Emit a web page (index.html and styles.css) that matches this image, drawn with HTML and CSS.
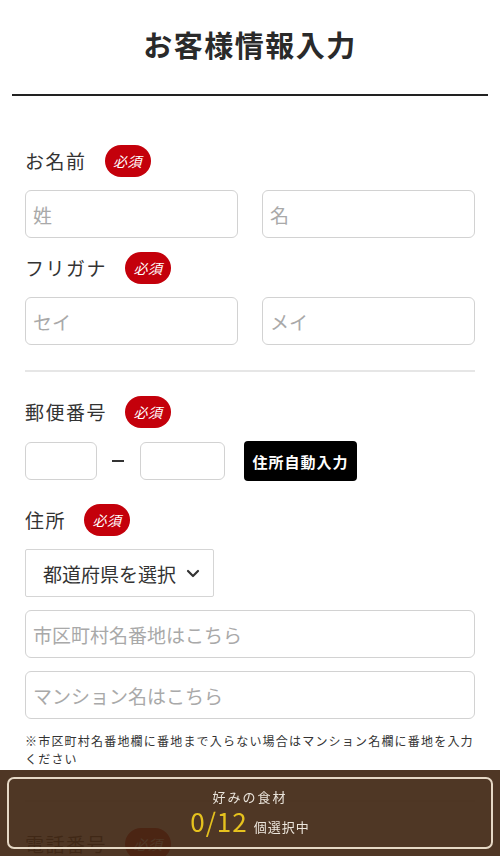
FILE: index.html
```html
<!DOCTYPE html>
<html lang="ja">
<head>
<meta charset="utf-8">
<title>お客様情報入力</title>
<link rel="stylesheet" href="styles.css">
</head>
<body>
<header class="page-head">
  <h1 class="page-title">お客様情報入力</h1>
</header>
<main class="form">
  <section class="field">
    <div class="label-row"><span class="label">お名前</span><span class="badge">必須</span></div>
    <div class="pair">
      <input class="text-input" type="text" placeholder="姓">
      <input class="text-input" type="text" placeholder="名">
    </div>
  </section>
  <section class="field">
    <div class="label-row"><span class="label">フリガナ</span><span class="badge">必須</span></div>
    <div class="pair">
      <input class="text-input" type="text" placeholder="セイ">
      <input class="text-input" type="text" placeholder="メイ">
    </div>
  </section>
  <hr class="divider">
  <section class="field zip-field">
    <div class="label-row"><span class="label">郵便番号</span><span class="badge">必須</span></div>
    <div class="zip-row">
      <input class="text-input zip1" type="text">
      <span class="dash"></span>
      <input class="text-input zip2" type="text">
      <button class="auto-btn" type="button">住所自動入力</button>
    </div>
  </section>
  <section class="field">
    <div class="label-row"><span class="label">住所</span><span class="badge">必須</span></div>
    <div class="select-box">
      <span>都道府県を選択</span>
      <svg class="chev" width="14" height="9" viewBox="0 0 14 9"><path d="M2 2 L7 7 L12 2" fill="none" stroke="#333" stroke-width="2.2" stroke-linecap="round" stroke-linejoin="round"/></svg>
    </div>
    <input class="text-input full" type="text" placeholder="市区町村名番地はこちら">
    <input class="text-input full" type="text" placeholder="マンション名はこちら">
    <p class="note">※市区町村名番地欄に番地まで入らない場合はマンション名欄に番地を入力ください</p>
  </section>
  <hr class="divider late">
  <section class="field">
    <div class="label-row"><span class="label">電話番号</span><span class="badge">必須</span></div>
    <input class="text-input full" type="text" placeholder="09012345678">
  </section>
  <section class="field">
    <div class="label-row"><span class="label">メールアドレス</span><span class="badge">必須</span></div>
    <input class="text-input full" type="text" placeholder="example@example.com">
  </section>
</main>
<div class="sticky-bar">
  <div class="sticky-inner">
    <div class="sticky-title">好みの食材</div>
    <div class="sticky-count"><span class="num">0/12</span><span class="unit">個選択中</span></div>
  </div>
</div>
</body>
</html>
```
FILE: styles.css
```css
* { box-sizing: border-box; }
html, body { margin: 0; padding: 0; }
body {
  width: 500px;
  background: #fff;
  color: #333;
  font-family: "Noto Sans CJK JP", "Noto Sans", sans-serif;
  padding-bottom: 120px;
}
.page-head {
  margin: 0 12px;
  padding-top: 27px;
  height: 96px;
  border-bottom: 2px solid #222;
}
.page-title {
  margin: 0;
  text-align: center;
  font-size: 29px;
  line-height: 34px;
  font-weight: 700;
  letter-spacing: 1.5px;
  color: #2a2a2a;
}
.form {
  padding: 49px 25px 0;
}
.field {
  display: flex;
  flex-direction: column;
  gap: 13px;
  margin-bottom: 14px;
}
.zip-field { margin-bottom: 23px; }
.label-row {
  display: flex;
  align-items: center;
  gap: 18px;
  height: 32px;
}
.label {
  font-size: 19px;
  letter-spacing: 1.5px;
  color: #333;
  line-height: 32px;
}
.badge {
  display: inline-flex;
  align-items: center;
  justify-content: center;
  width: 46px;
  height: 32px;
  border-radius: 16px;
  background: #c4000b;
  color: #fff;
  font-size: 14px;
  font-style: italic;
  letter-spacing: 0.5px;
}
.pair {
  display: grid;
  grid-template-columns: 1fr 1fr;
  gap: 24px;
}
.text-input {
  display: block;
  height: 48px;
  width: 100%;
  border: 1.5px solid #d2d2d2;
  border-radius: 6px;
  padding: 0 7px;
  font-family: inherit;
  font-size: 19px;
  color: #333;
  background: #fff;
  outline: none;
}
.text-input::placeholder { color: #a9a9a9; }
.divider {
  border: 0;
  border-top: 2px solid #e6e6e6;
  margin: 25px 0 24px;
}
.divider.late { margin: 32px 0 26px; }
.zip-row {
  display: flex;
  align-items: center;
  height: 40px;
}
.zip1 { width: 72px; height: 38px; }
.zip2 { width: 85px; height: 38px; }
.dash {
  width: 12px;
  height: 2px;
  background: #333;
  margin: 0 16px 0 15px;
}
.auto-btn {
  margin-left: 19px;
  width: 113px;
  height: 40px;
  border: 0;
  border-radius: 4px;
  background: #000;
  color: #fff;
  font-family: inherit;
  font-size: 15px;
  font-weight: 700;
  letter-spacing: 1px;
  padding: 0;
}
.select-box {
  width: 189px;
  height: 48px;
  border: 1.5px solid #d5d5d5;
  border-radius: 2px;
  display: flex;
  align-items: center;
  justify-content: space-between;
  padding: 0 13px 0 17px;
  font-size: 19px;
  color: #333;
}
.chev { display: block; }
.note {
  margin: 0;
  font-size: 12px;
  line-height: 18px;
  letter-spacing: 1.2px;
  color: #333;
}
.sticky-bar {
  position: fixed;
  left: 0;
  right: 0;
  bottom: 0;
  height: 86px;
  background: rgba(66, 40, 20, 0.93);
  padding: 7px;
}
.sticky-inner {
  height: 72px;
  border: 2px solid #e6d9c6;
  border-radius: 7px;
  display: flex;
  flex-direction: column;
  align-items: center;
  justify-content: center;
  padding-top: 4px;
}
.sticky-title {
  color: #e9e3da;
  font-size: 13px;
  letter-spacing: 2px;
  line-height: 18px;
}
.sticky-count {
  display: flex;
  align-items: baseline;
  gap: 6px;
  line-height: 30px;
}
.num {
  color: #e6c21e;
  font-size: 26px;
  letter-spacing: 1px;
}
.unit {
  color: #ece6dc;
  font-size: 13px;
  letter-spacing: 1px;
}
```
